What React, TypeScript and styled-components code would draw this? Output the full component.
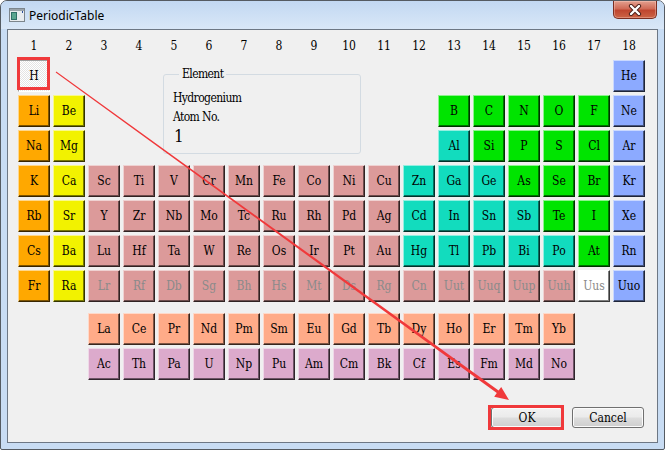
import React from "react";
import styled, { createGlobalStyle, css } from "styled-components";

const GlobalStyle = createGlobalStyle`
  html, body {
    margin: 0;
    padding: 0;
    background: #ffffff;
  }
`;

const bitmapFont = `"DejaVu Serif Condensed", "DejaVu Serif", "Liberation Serif", serif`;

type Kind =
  | "alkali"
  | "earth"
  | "transition"
  | "metal"
  | "nonmetal"
  | "noble"
  | "lanthanide"
  | "actinide"
  | "unknown"
  | "selected";

const palette: Record<Kind, string> = {
  alkali: "#ffa800",
  earth: "#f2f200",
  transition: "#dc9a9a",
  metal: "#12dcbe",
  nonmetal: "#00e400",
  noble: "#8caaff",
  lanthanide: "#ffab88",
  actinide: "#dcaacc",
  unknown: "#ffffff",
  selected: "#ffffff",
};

const kindCodes: Record<string, Kind> = {
  a: "alkali",
  e: "earth",
  t: "transition",
  m: "metal",
  n: "nonmetal",
  g: "noble",
  l: "lanthanide",
  c: "actinide",
  u: "unknown",
  h: "selected",
};

// [grid row, first column, "Symbol/kind" list; a trailing * greys the text]
const layout: [number, number, string][] = [
  [2, 1, "H/h"],
  [2, 18, "He/g"],
  [3, 1, "Li/a Be/e"],
  [3, 13, "B/n C/n N/n O/n F/n Ne/g"],
  [4, 1, "Na/a Mg/e"],
  [4, 13, "Al/m Si/n P/n S/n Cl/n Ar/g"],
  [5, 1, "K/a Ca/e Sc/t Ti/t V/t Cr/t Mn/t Fe/t Co/t Ni/t Cu/t Zn/m Ga/m Ge/m As/n Se/n Br/n Kr/g"],
  [6, 1, "Rb/a Sr/e Y/t Zr/t Nb/t Mo/t Tc/t Ru/t Rh/t Pd/t Ag/t Cd/m In/m Sn/m Sb/m Te/n I/n Xe/g"],
  [7, 1, "Cs/a Ba/e Lu/t Hf/t Ta/t W/t Re/t Os/t Ir/t Pt/t Au/t Hg/m Tl/m Pb/m Bi/m Po/m At/n Rn/g"],
  [8, 1, "Fr/a Ra/e Lr/t* Rf/t* Db/t* Sg/t* Bh/t* Hs/t* Mt/t* Ds/t* Rg/t* Cn/t* Uut/t* Uuq/t* Uup/t* Uuh/t* Uus/u* Uuo/g"],
  [10, 3, "La/l Ce/l Pr/l Nd/l Pm/l Sm/l Eu/l Gd/l Tb/l Dy/l Ho/l Er/l Tm/l Yb/l"],
  [11, 3, "Ac/c Th/c Pa/c U/c Np/c Pu/c Am/c Cm/c Bk/c Cf/c Es/c Fm/c Md/c No/c"],
];

type Element = { symbol: string; kind: Kind; row: number; col: number; dim: boolean };

const elements: Element[] = layout.flatMap(([row, start, list]) =>
  list.split(" ").map((item, i) => {
    const dim = item.endsWith("*");
    const [symbol, code] = item.replace("*", "").split("/");
    return { symbol, kind: kindCodes[code], row, col: start + i, dim };
  })
);

const Window = styled.div`
  position: relative;
  width: 665px;
  height: 450px;
  box-sizing: border-box;
  border: 1px solid #555b62;
  border-radius: 7px 7px 2px 2px;
  background: #c8dcf3;
  display: flex;
  flex-direction: column;
  overflow: hidden;
`;

const TitleBar = styled.div`
  height: 28px;
  flex-shrink: 0;
  display: flex;
  align-items: center;
  padding-left: 8px;
  background: linear-gradient(#c2d8f2, #d9e7f7);
`;

const AppIcon = styled.svg`
  width: 16px;
  height: 16px;
  flex-shrink: 0;
`;

const Title = styled.span`
  margin-left: 4px;
  font: 12px "Noto Sans", "Open Sans", sans-serif;
  color: #000000;
`;

const CloseButton = styled.div`
  align-self: flex-start;
  margin-left: auto;
  margin-right: 7px;
  width: 44px;
  height: 18px;
  box-sizing: border-box;
  border: 1px solid #7a2e22;
  border-top: none;
  border-radius: 0 0 5px 5px;
  background: linear-gradient(#e3a08f 0%, #d06b57 45%, #bf4630 55%, #cc6446 100%);
  box-shadow: inset 0 0 0 1px rgba(255, 220, 210, 0.35);
  display: flex;
  align-items: center;
  justify-content: center;
`;

const Client = styled.div`
  flex: 1;
  margin: 0 6px 6px 6px;
  border: 1px solid #6d7784;
  background: #f0f0f0;
  display: flex;
  flex-direction: column;
`;

const Table = styled.div`
  display: grid;
  grid-template-columns: repeat(18, 32px);
  grid-template-rows: 23px repeat(7, 32px) 5px repeat(2, 32px);
  gap: 3px;
  padding: 4px 0 0 10px;
`;

const GroupNumber = styled.div<{ $col: number }>`
  grid-column: ${(p) => p.$col};
  grid-row: 1;
  display: flex;
  align-items: center;
  justify-content: center;
  font: 12px ${bitmapFont};
  color: #000000;
`;

const Cell = styled.div<{ $kind: Kind; $col: number; $row: number; $dim: boolean }>`
  grid-column: ${(p) => p.$col};
  grid-row: ${(p) => p.$row};
  box-sizing: border-box;
  display: flex;
  align-items: center;
  justify-content: center;
  background: ${(p) => palette[p.$kind]};
  border-top: 1px solid rgba(255, 255, 255, 0.55);
  border-left: 1px solid rgba(255, 255, 255, 0.55);
  border-right: 1px solid rgba(0, 0, 0, 0.78);
  border-bottom: 1px solid rgba(0, 0, 0, 0.78);
  box-shadow: inset -1px -1px 0 rgba(0, 0, 0, 0.5);
  font: 12px ${bitmapFont};
  color: ${(p) => (p.$dim ? "#8a8a8a" : "#000000")};
  ${(p) =>
    p.$kind === "selected" &&
    css`
      border-top: 1px solid #a0a0a0;
      border-left: 1px solid #a0a0a0;
      border-right: 1px solid #ffffff;
      border-bottom: 1px solid #ffffff;
      box-shadow: none;
      background: repeating-conic-gradient(#ffffff 0 25%, #e4e4e4 0 50%) 0 0 / 2px 2px;
    `}
`;

const ElementBox = styled.fieldset`
  grid-column: 5 / 11;
  grid-row: 2 / 5;
  margin: 7px 4px 8px 5px;
  padding: 0 0 0 9px;
  border: 1px solid #d3dbe2;
  border-radius: 3px;
  min-width: 0;
  font: 12px ${bitmapFont};
  letter-spacing: -0.6px;
  color: #000000;
`;

const BoxLegend = styled.legend`
  margin-left: 6px;
  padding: 0 3px;
  line-height: 14px;
`;

const InfoLine = styled.div<{ $big?: boolean }>`
  line-height: ${(p) => (p.$big ? "18px" : "19px")};
  font-size: ${(p) => (p.$big ? "17px" : "12px")};
  padding-left: ${(p) => (p.$big ? "1px" : "0")};
  &:first-of-type {
    margin-top: 8px;
  }
`;

const Footer = styled.div`
  margin-top: auto;
  display: flex;
  justify-content: flex-end;
  gap: 9px;
  padding: 0 13px 14px 0;
`;

const DialogButton = styled.button`
  width: 72px;
  height: 21px;
  padding: 0;
  border: 1px solid #707070;
  border-radius: 3px;
  background: linear-gradient(#f2f2f2 0%, #ebebeb 48%, #dddddd 52%, #cfcfcf 100%);
  box-shadow: inset 0 0 0 1px #fbfbfb;
  font: 12px ${bitmapFont};
  color: #000000;
`;

const Annotation = styled.svg`
  position: absolute;
  left: -1px;
  top: -1px;
  width: 665px;
  height: 450px;
  pointer-events: none;
`;

export default function App() {
  return (
    <>
      <GlobalStyle />
      <Window>
        <TitleBar>
          <AppIcon viewBox="0 0 16 16">
            <rect x="0.5" y="1.5" width="15" height="13" fill="#e8ecef" stroke="#7c858c" />
            <rect x="1" y="2" width="14" height="2" fill="#9aa3aa" />
            <rect x="2" y="5" width="6" height="8" fill="#2f6f68" />
            <rect x="3" y="6" width="4" height="6" fill="#59a58f" />
            <rect x="13" y="4" width="1" height="2" fill="#2c4f9a" />
          </AppIcon>
          <Title>PeriodicTable</Title>
          <CloseButton>
            <svg width="16" height="12" viewBox="0 0 16 12">
              <path d="M4 2 L12 10 M12 2 L4 10" stroke="#4a1e18" strokeWidth="4.2" strokeLinecap="round" />
              <path d="M4 2 L12 10 M12 2 L4 10" stroke="#ffffff" strokeWidth="2.4" strokeLinecap="round" />
            </svg>
          </CloseButton>
        </TitleBar>
        <Client>
          <Table>
            {Array.from({ length: 18 }, (_, i) => (
              <GroupNumber key={i} $col={i + 1}>
                {i + 1}
              </GroupNumber>
            ))}
            {elements.map((el) => (
              <Cell key={el.symbol} $kind={el.kind} $col={el.col} $row={el.row} $dim={el.dim}>
                {el.symbol}
              </Cell>
            ))}
            <ElementBox>
              <BoxLegend>Element</BoxLegend>
              <InfoLine>Hydrogenium</InfoLine>
              <InfoLine>Atom No.</InfoLine>
              <InfoLine $big>1</InfoLine>
            </ElementBox>
          </Table>
          <Footer>
            <DialogButton>OK</DialogButton>
            <DialogButton>Cancel</DialogButton>
          </Footer>
        </Client>
        <Annotation viewBox="0 0 665 450">
          <rect x="18.5" y="58.5" width="30" height="30" fill="none" stroke="#f0393b" strokeWidth="3" />
          <rect x="489.5" y="406.5" width="73" height="22" fill="none" stroke="#f0393b" strokeWidth="3" />
          <polygon
            points="56.3,71.6 498.6,390.6 501.2,386.9 509,400 494.2,396.7 496.8,393 55.7,72.4"
            fill="#f0393b"
          />
        </Annotation>
      </Window>
    </>
  );
}
